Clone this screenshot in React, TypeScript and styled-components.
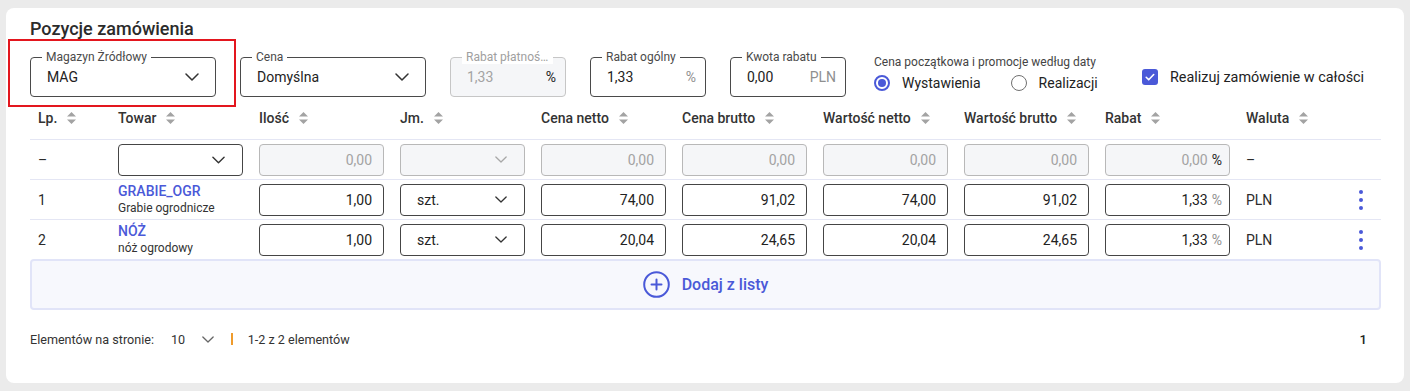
import React from 'react'
import styled, { createGlobalStyle } from 'styled-components'

const BLUE = '#4a59d8'

const GlobalStyle = createGlobalStyle`
    * { box-sizing: border-box; }
    body {
        margin: 0;
        background: #ebebeb;
        font-family: Roboto, "Noto Sans", sans-serif;
        color: #2b2b2b;
    }
`

const Card = styled.section`
    margin: 8px 6px 0;
    height: 375px;
    background: #fff;
    border-radius: 8px;
    padding: 10px 23px 0 24px;
`

const Title = styled.h2`
    margin: 0;
    font-size: 18px;
    font-weight: 500;
    line-height: 22px;
    color: #2b2b2b;
`

const Toolbar = styled.div`
    display: flex;
    align-items: center;
    gap: 24px;
    margin-top: 17px;
    height: 40px;
`

const Highlight = styled.div`
    position: relative;
    flex: none;

    &::after {
        content: '';
        position: absolute;
        top: -18px;
        left: -22px;
        right: -20px;
        bottom: -10px;
        border: 2px solid #e3161e;
        pointer-events: none;
    }
`

const Field = styled.div<{ $w: number; $disabled?: boolean; $select?: boolean }>`
    position: relative;
    flex: none;
    width: ${ p => p.$w }px;
    height: 40px;
    display: flex;
    align-items: center;
    justify-content: space-between;
    padding: ${ p => p.$select ? '0 16px' : '0 9px 0 16px' };
    border: 1px solid ${ p => p.$disabled ? '#c6c6c6' : '#4a4a4a' };
    border-radius: 4px;
    background: ${ p => p.$disabled ? '#f5f6f8' : '#fff' };
    font-size: 14px;
    color: ${ p => p.$disabled ? '#a3a3a3' : '#222' };
`

const FieldLabel = styled.span<{ $disabled?: boolean }>`
    position: absolute;
    top: -8px;
    left: 11px;
    max-width: calc(100% - 23px);
    padding: 0 4px;
    background: #fff;
    font-size: 12px;
    line-height: 14px;
    color: ${ p => p.$disabled ? '#a0a0a0' : '#4a4a4a' };
    white-space: nowrap;
    overflow: hidden;
    text-overflow: ellipsis;
`

const Suffix = styled.span<{ $muted?: boolean }>`
    color: ${ p => p.$muted ? '#8f8f8f' : '#222' };
`

const RadioGroup = styled.div`
    flex: none;
    width: 244px;
    margin-left: 4px;
    align-self: flex-start;
    margin-top: -2px;
`

const GroupLabel = styled.div`
    font-size: 12px;
    line-height: 14px;
    color: #444;
`

const RadioRow = styled.div`
    display: flex;
    align-items: center;
    gap: 30px;
    height: 20px;
    margin-top: 4px;
`

const RadioItem = styled.label`
    display: flex;
    align-items: center;
    gap: 12px;
    font-size: 14px;
    color: #222;
`

const RadioDot = styled.span<{ $on?: boolean }>`
    width: 16px;
    height: 16px;
    border-radius: 50%;
    border: ${ p => p.$on ? `2px solid ${ BLUE }` : '1.5px solid #707070' };
    display: flex;
    align-items: center;
    justify-content: center;

    &::after {
        content: '';
        width: 8px;
        height: 8px;
        border-radius: 50%;
        background: ${ p => p.$on ? BLUE : 'transparent' };
    }
`

const CheckItem = styled.label`
    display: flex;
    align-items: center;
    gap: 12px;
    font-size: 14.4px;
    color: #222;
`

const CheckBox = styled.span`
    width: 16px;
    height: 16px;
    border-radius: 3px;
    background: ${ BLUE };
    display: flex;
    align-items: center;
    justify-content: center;
`

const Table = styled.div`
    margin-top: 6px;
`

const Row = styled.div<{ $head?: boolean }>`
    display: grid;
    grid-template-columns: 80px repeat(8, 141px) 100px 1fr;
    align-items: center;
    height: ${ p => p.$head ? 37 : 40 }px;
    padding-bottom: ${ p => p.$head ? 6 : 0 }px;
    border-bottom: 1px solid #e4e6f4;

    &:last-child {
        border-bottom: none;
        height: 39px;
    }
`

const Cell = styled.div`
    display: flex;
    align-items: center;
    padding: 0 8px;
    font-size: 14px;
    color: #2b2b2b;
`

const HeadCell = styled(Cell)`
    font-weight: 500;
    color: #333;

    svg {
        margin-left: 10px;
    }
`

const ActionCell = styled(Cell)`
    justify-content: center;
    padding: 0 0 0 3px;
`

const Box = styled.div<{ $disabled?: boolean; $select?: boolean }>`
    width: 100%;
    height: 32px;
    display: flex;
    align-items: center;
    justify-content: ${ p => p.$select ? 'space-between' : 'flex-end' };
    padding: ${ p => p.$select ? '0 17px 0 16px' : '0 11px 0 16px' };
    border: 1px solid ${ p => p.$disabled ? '#b8b8b8' : '#454545' };
    border-radius: 4px;
    background: ${ p => p.$disabled ? '#f5f6f8' : '#fff' };
    font-size: 14px;
    color: ${ p => p.$disabled ? '#a3a3a3' : '#222' };
`

const PercentBox = styled(Box)`
    padding-right: 7px;

    span {
        margin-left: 4px;
    }
`

const Product = styled.div`
    display: flex;
    flex-direction: column;
    padding-top: 1px;
`

const ProductCode = styled.span`
    font-size: 14px;
    font-weight: 500;
    line-height: 17px;
    color: ${ BLUE };
`

const ProductName = styled.span`
    font-size: 12px;
    line-height: 17px;
    color: #333;
`

const Kebab = styled.div`
    display: flex;
    flex-direction: column;
    gap: 4px;

    span {
        width: 4px;
        height: 4px;
        border-radius: 50%;
        background: ${ BLUE };
    }
`

const AddBar = styled.button`
    width: 100%;
    height: 51px;
    display: flex;
    align-items: center;
    justify-content: center;
    gap: 12px;
    background: #f7f8fd;
    border: 2px solid #e1e4f8;
    border-radius: 4px;
    color: ${ BLUE };
    font-family: Roboto, "Noto Sans", sans-serif;
    font-size: 16px;
    font-weight: 500;
    cursor: pointer;
`

const Footer = styled.div`
    display: flex;
    align-items: center;
    height: 20px;
    margin-top: 19px;
    padding-right: 14px;
    font-size: 12.6px;
    color: #333;
`

const PageSize = styled.span`
    margin-left: 17px;
    margin-right: 17px;
`

const Divider = styled.span`
    width: 1.5px;
    height: 12px;
    background: #ef9b2c;
    margin: 0 15px 0 17px;
`

const PageNumber = styled.span`
    margin-left: auto;
    font-size: 13px;
    font-weight: 500;
    color: #222;
`

const Chevron: React.FC<{ color?: string; w?: number }> = ({ color = '#333', w = 14 }) => (
    <svg width={ w } height={ Math.round(w / 2) + 1 } viewBox="0 0 14 8" fill="none">
        <path d="M1 1l6 6 6-6" stroke={ color } strokeWidth="1.5" strokeLinecap="round" strokeLinejoin="round" />
    </svg>
)

const SortIcon = () => (
    <svg width="9" height="12" viewBox="0 0 9 12">
        <path d="M4.5 0L9 4.6H0z M0 7.4h9L4.5 12z" fill="#a3a3a3" />
    </svg>
)

const Check = () => (
    <svg width="12" height="12" viewBox="0 0 12 12" fill="none">
        <path d="M2.2 6.3l2.5 2.5 5-5.3" stroke="#fff" strokeWidth="1.6" strokeLinecap="round" strokeLinejoin="round" />
    </svg>
)

const PlusCircle = () => (
    <svg width="27" height="27" viewBox="0 0 27 27" fill="none">
        <circle cx="13.5" cy="13.5" r="12.3" stroke={ BLUE } strokeWidth="2" />
        <path d="M13.5 8.5v10M8.5 13.5h10" stroke={ BLUE } strokeWidth="2" strokeLinecap="round" />
    </svg>
)

const headers = [ 'Lp.', 'Towar', 'Ilość', 'Jm.', 'Cena netto', 'Cena brutto', 'Wartość netto', 'Wartość brutto', 'Rabat', 'Waluta' ]

interface IItem {
    lp: number;
    code: string;
    name: string;
    qty: string;
    unit: string;
    net: string;
    gross: string;
    netValue: string;
    grossValue: string;
    discount: string;
}

const items: IItem[] = [
    { lp: 1, code: 'GRABIE_OGR', name: 'Grabie ogrodnicze', qty: '1,00', unit: 'szt.', net: '74,00', gross: '91,02', netValue: '74,00', grossValue: '91,02', discount: '1,33' },
    { lp: 2, code: 'NÓŻ', name: 'nóż ogrodowy', qty: '1,00', unit: 'szt.', net: '20,04', gross: '24,65', netValue: '20,04', grossValue: '24,65', discount: '1,33' },
]

const App: React.FC = () => {
    return (
        <>
            <GlobalStyle />
            <Card>
                <Title>Pozycje zamówienia</Title>

                <Toolbar>
                    <Highlight>
                        <Field $w={ 186 } $select>
                            <FieldLabel>Magazyn Źródłowy</FieldLabel>
                            MAG
                            <Chevron />
                        </Field>
                    </Highlight>
                    <Field $w={ 186 } $select>
                        <FieldLabel>Cena</FieldLabel>
                        Domyślna
                        <Chevron />
                    </Field>
                    <Field $w={ 116 } $disabled>
                        <FieldLabel $disabled>Rabat płatności</FieldLabel>
                        1,33
                        <Suffix>%</Suffix>
                    </Field>
                    <Field $w={ 116 }>
                        <FieldLabel>Rabat ogólny</FieldLabel>
                        1,33
                        <Suffix $muted>%</Suffix>
                    </Field>
                    <Field $w={ 116 }>
                        <FieldLabel>Kwota rabatu</FieldLabel>
                        0,00
                        <Suffix $muted>PLN</Suffix>
                    </Field>
                    <RadioGroup>
                        <GroupLabel>Cena początkowa i promocje według daty</GroupLabel>
                        <RadioRow>
                            <RadioItem><RadioDot $on />Wystawienia</RadioItem>
                            <RadioItem><RadioDot />Realizacji</RadioItem>
                        </RadioRow>
                    </RadioGroup>
                    <CheckItem>
                        <CheckBox><Check /></CheckBox>
                        Realizuj zamówienie w całości
                    </CheckItem>
                </Toolbar>

                <Table>
                    <Row $head>
                        { headers.map(h => (
                            <HeadCell key={ h }>{ h }<SortIcon /></HeadCell>
                        )) }
                        <Cell />
                    </Row>
                    <Row>
                        <Cell>–</Cell>
                        <Cell><Box $select><span /><Chevron w={ 13 } /></Box></Cell>
                        <Cell><Box $disabled>0,00</Box></Cell>
                        <Cell><Box $disabled $select><span /><Chevron color="#a8a8a8" w={ 12 } /></Box></Cell>
                        <Cell><Box $disabled>0,00</Box></Cell>
                        <Cell><Box $disabled>0,00</Box></Cell>
                        <Cell><Box $disabled>0,00</Box></Cell>
                        <Cell><Box $disabled>0,00</Box></Cell>
                        <Cell><PercentBox $disabled>0,00<Suffix>%</Suffix></PercentBox></Cell>
                        <Cell>–</Cell>
                        <Cell />
                    </Row>
                    { items.map(item => (
                        <Row key={ item.lp }>
                            <Cell>{ item.lp }</Cell>
                            <Cell>
                                <Product>
                                    <ProductCode>{ item.code }</ProductCode>
                                    <ProductName>{ item.name }</ProductName>
                                </Product>
                            </Cell>
                            <Cell><Box>{ item.qty }</Box></Cell>
                            <Cell><Box $select>{ item.unit }<Chevron w={ 12 } /></Box></Cell>
                            <Cell><Box>{ item.net }</Box></Cell>
                            <Cell><Box>{ item.gross }</Box></Cell>
                            <Cell><Box>{ item.netValue }</Box></Cell>
                            <Cell><Box>{ item.grossValue }</Box></Cell>
                            <Cell><PercentBox>{ item.discount }<Suffix $muted>%</Suffix></PercentBox></Cell>
                            <Cell>PLN</Cell>
                            <ActionCell><Kebab><span /><span /><span /></Kebab></ActionCell>
                        </Row>
                    )) }
                </Table>

                <AddBar>
                    <PlusCircle />
                    Dodaj z listy
                </AddBar>

                <Footer>
                    Elementów na stronie:
                    <PageSize>10</PageSize>
                    <Chevron color="#666" w={ 12 } />
                    <Divider />
                    1-2 z 2 elementów
                    <PageNumber>1</PageNumber>
                </Footer>
            </Card>
        </>
    )
}

export default App
